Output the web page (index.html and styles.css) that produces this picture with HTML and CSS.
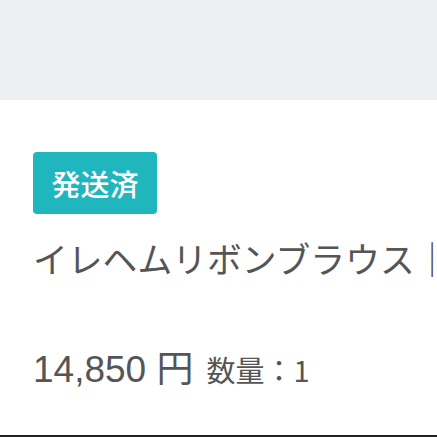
FILE: index.html
```html
<!DOCTYPE html>
<html lang="ja">
<head>
    <meta charset="UTF-8">
    <meta name="viewport" content="width=device-width, initial-scale=1.0">
    <title>注文履歴</title>
    <link rel="stylesheet" href="styles.css">
</head>
<body>
    <div class="page">
        <!-- top spacer -->
        <div class="header-space"></div>

        <!-- order item -->
        <div class="order-item">
            <span class="status-badge">発送済</span>
            <div class="item-name">イレヘムリボンブラウス｜ホワイト</div>
            <div class="item-meta">
                <span class="price">14,850 円</span>
                <span class="qty">数量：1</span>
            </div>
        </div>
    </div>
</body>
</html>
```

FILE: styles.css
```css
body {
    margin: 0;
    padding: 0;
    background-color: #fff;
    font-family: "Noto Sans CJK JP", sans-serif;
    color: #555;
}

.page {
    height: 437px;
    overflow: hidden;
    display: flex;
    flex-direction: column;
}

.header-space {
    height: 100px;
    background-color: #eeeff1;
    flex-shrink: 0;
}

.order-item {
    flex: 1;
    min-width: 0;
    padding: 52px 0 0 33px;
    border-bottom: 2px solid #222;
    display: flex;
    flex-direction: column;
    align-items: flex-start;
    overflow: hidden;
}

.status-badge {
    display: flex;
    align-items: center;
    justify-content: center;
    width: 124px;
    height: 62px;
    box-sizing: border-box;
    background-color: #1fb6bd;
    color: #fff;
    font-size: 29px;
    font-weight: 500;
    border-radius: 4px;
}

.item-name {
    margin-top: 22px;
    font-size: 34.8px;
    line-height: 44px;
    white-space: nowrap;
}

.item-meta {
    margin-top: 66px;
    display: flex;
    align-items: baseline;
    line-height: 46px;
}

.price {
    font-family: "Liberation Sans", "Noto Sans CJK JP", sans-serif;
    font-size: 37px;
}

.qty {
    margin-left: 13px;
    font-size: 29px;
}
```
